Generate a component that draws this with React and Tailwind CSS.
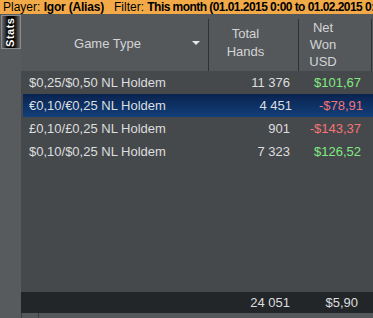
import React from "react";

const rows = [
  { game: "$0,25/$0,50 NL Holdem", hands: "11 376", net: "$101,67", up: true },
  { game: "€0,10/€0,25 NL Holdem", hands: "4 451", net: "-$78,91", up: false, sel: true },
  { game: "£0,10/£0,25 NL Holdem", hands: "901", net: "-$143,37", up: false },
  { game: "$0,10/$0,25 NL Holdem", hands: "7 323", net: "$126,52", up: true },
];

const font = { fontFamily: '"Liberation Sans", Arial, sans-serif' };

export default function App() {
  return (
    <div className="w-[373px] h-[318px] overflow-hidden bg-[#55585b] flex flex-col" style={font}>
      {/* filter bar */}
      <div className="h-[14px] bg-[#f2aa48] text-black text-[12px] leading-[14px] pl-[3px] whitespace-nowrap overflow-hidden">
        Player: <b className="tracking-[-0.2px]">Igor (Alias)</b>&nbsp;&nbsp; Filter:{" "}
        <b className="tracking-[-0.55px]">This month (01.01.2015 0:00 to 01.02.2015 0:00</b>
      </div>

      <div className="flex flex-1 min-h-0">
        {/* side tabs */}
        <div className="w-[21px] bg-[#585b5e] pt-px pl-px flex flex-col">
          <div className="w-[20px] h-[34px] border border-[#8a8d90] bg-[linear-gradient(to_right,#6a6a6a,#000_35%,#000_65%,#6a6a6a)] flex items-center justify-center">
            <span className="-rotate-90 text-white text-[11px] font-bold tracking-[0.5px]">Stats</span>
          </div>
        </div>

        <div className="flex-1 flex flex-col min-w-0">
          {/* header */}
          <div className="h-[57px] grid grid-cols-[188px_90px_73px_1fr] text-[#d2d4d6] text-[13px]">
            <div className="relative flex items-center justify-center border-r border-[#2f3234] my-[5px] pr-[14px] pb-[2px]">
              <span>Game Type</span>
              <svg className="absolute right-[8px] top-[22px]" width="8" height="5" viewBox="0 0 8 5">
                <path d="M0 0H8L4 4Z" fill="#e6e6e6" />
              </svg>
            </div>
            <div className="flex items-center justify-center text-center leading-[18px] border-r border-[#2f3234] my-[5px] pr-[16px] pb-[4px]">
              Total<br />Hands
            </div>
            <div className="flex items-center justify-center text-center leading-[17px] border-r border-[#2f3234] my-[5px] pr-[24px] pb-[1px]">
              Net<br />Won<br />USD
            </div>
            <div />
          </div>

          {/* data */}
          <div className="flex-1 bg-[#46494c] text-[13px] text-[#dcdedf]">
            {rows.map((r) => (
              <div
                key={r.game}
                className={`h-[23px] grid grid-cols-[188px_90px_73px_1fr] items-center ${
                  r.sel ? "ml-[2px] bg-[linear-gradient(to_bottom,#0a2350,#123f78)]" : ""
                }`}
              >
                <div className={r.sel ? "pl-[6px]" : "pl-[8px]"}>{r.game}</div>
                <div className="text-right pr-[9px]">{r.hands}</div>
                <div className={`text-right pr-[11px] ${r.up ? "text-[#80ea80]" : "text-[#f47474]"}`}>{r.net}</div>
                <div />
              </div>
            ))}
          </div>

          {/* totals */}
          <div className="h-[21px] bg-[#232629] grid grid-cols-[188px_90px_73px_1fr] items-center text-[13px] text-[#dcdedf]">
            <div />
            <div className="text-right pr-[9px]">24 051</div>
            <div className="text-right pr-[14px]">$5,90</div>
            <div />
          </div>

          {/* bottom strip */}
          <div className="h-[5px] flex bg-[#55585b]">
            <div className="w-[1px] bg-[#3a3d40]" />
            <div className="w-[17px] border-r border-[#3a3d40]" />
          </div>
        </div>
      </div>
    </div>
  );
}
